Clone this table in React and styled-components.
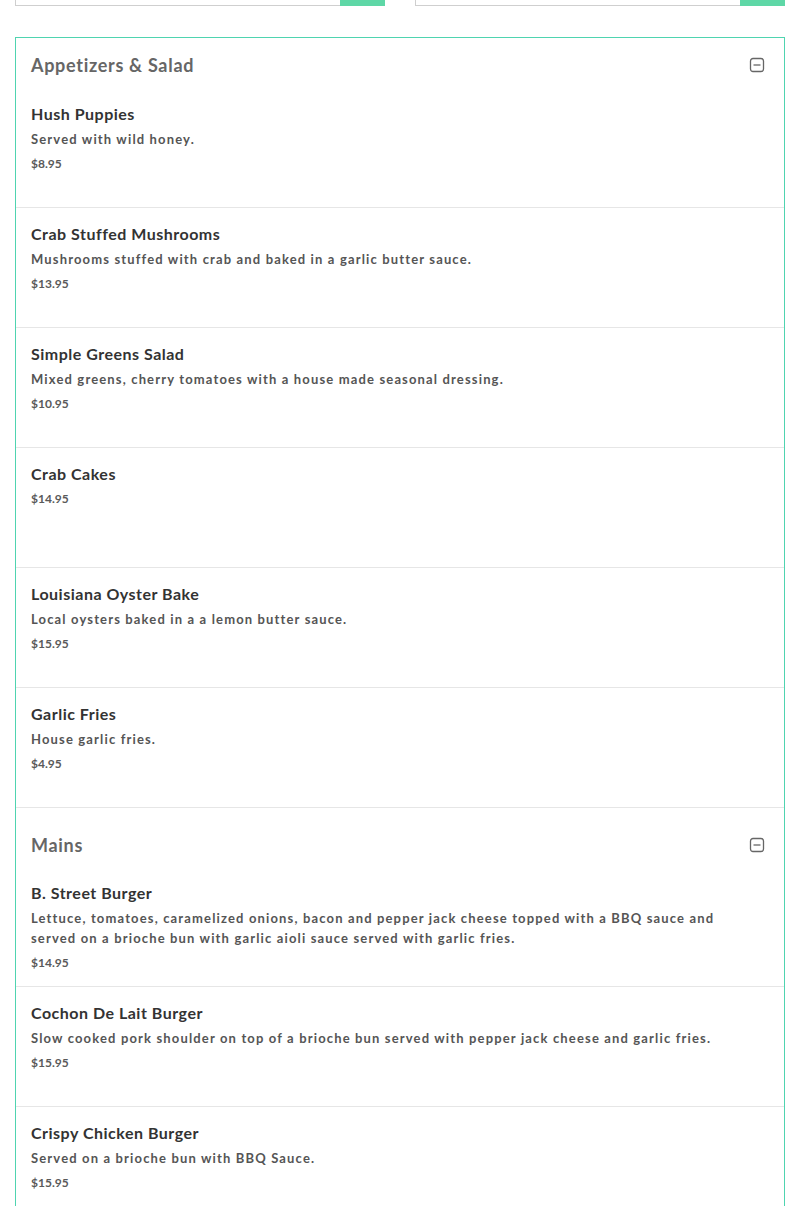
import React from 'react';
import styled, { createGlobalStyle } from 'styled-components';

const GlobalStyle = createGlobalStyle`
  body {
    margin: 0;
    background: #fff;
    font-family: Lato, 'Liberation Sans', sans-serif;
  }
`;

const Page = styled.div`
  padding: 0 15px;
`;

const SearchRow = styled.div`
  display: flex;
  gap: 30px;
  height: 6px;
  overflow: hidden;
  align-items: flex-end;
`;

const SearchBox = styled.div`
  flex: 1;
  display: flex;
  height: 40px;
  border: 1px solid #cfcfcf;
  box-sizing: border-box;
`;

const SearchInput = styled.div`
  flex: 1;
`;

const SearchButton = styled.div`
  width: 45px;
  margin: -1px -1px -1px 0;
  background-color: #5ed7a6;
`;

const Card = styled.div`
  margin-top: 31px;
  border: 1px solid #4fd4b0;
`;

const SectionHeader = styled.div`
  display: flex;
  align-items: center;
  justify-content: space-between;
  height: ${p => p.$height}px;
  padding: ${p => p.$top}px 19px 0 15px;
  box-sizing: border-box;
`;

const SectionTitle = styled.h2`
  margin: 0;
  font-size: 18px;
  font-weight: 700;
  color: #666;
  letter-spacing: 0.7px;
`;

const Item = styled.div`
  height: 120px;
  box-sizing: border-box;
  padding: 16px 60px 0 15px;
  border-bottom: 1px solid #e6e6e6;
`;

const ItemName = styled.h3`
  margin: 0 0 5px 0;
  font-size: 16px;
  font-weight: 700;
  color: #333;
  line-height: 20px;
  letter-spacing: 0.5px;
`;

const ItemDesc = styled.p`
  margin: 0 0 5px 0;
  font-size: 13px;
  font-weight: 700;
  color: #555;
  letter-spacing: 1.15px;
  line-height: 20px;
`;

const ItemPrice = styled.p`
  margin: 0;
  font-size: 12px;
  font-weight: 700;
  color: #5a5a5a;
  line-height: 20px;
`;

const MinusBox = () => (
  <svg width="16" height="16" viewBox="0 0 16 16" fill="none">
    <rect x="1.5" y="1.5" width="13" height="13" rx="2.5" stroke="#666" strokeWidth="1.3" />
    <line x1="4.5" y1="8" x2="11.5" y2="8" stroke="#666" strokeWidth="1.3" />
  </svg>
);

const sections = [
  {
    title: 'Appetizers & Salad',
    height: 50,
    top: 4,
    items: [
      { name: 'Hush Puppies', desc: 'Served with wild honey.', price: '$8.95' },
      { name: 'Crab Stuffed Mushrooms', desc: 'Mushrooms stuffed with crab and baked in a garlic butter sauce.', price: '$13.95' },
      { name: 'Simple Greens Salad', desc: 'Mixed greens, cherry tomatoes with a house made seasonal dressing.', price: '$10.95' },
      { name: 'Crab Cakes', desc: '', price: '$14.95' },
      { name: 'Louisiana Oyster Bake', desc: 'Local oysters baked in a a lemon butter sauce.', price: '$15.95' },
      { name: 'Garlic Fries', desc: 'House garlic fries.', price: '$4.95' },
    ],
  },
  {
    title: 'Mains',
    height: 59,
    top: 14,
    items: [
      { name: 'B. Street Burger', desc: 'Lettuce, tomatoes, caramelized onions, bacon and pepper jack cheese topped with a BBQ sauce and served on a brioche bun with garlic aioli sauce served with garlic fries.', price: '$14.95' },
      { name: 'Cochon De Lait Burger', desc: 'Slow cooked pork shoulder on top of a brioche bun served with pepper jack cheese and garlic fries.', price: '$15.95' },
      { name: 'Crispy Chicken Burger', desc: 'Served on a brioche bun with BBQ Sauce.', price: '$15.95' },
    ],
  },
];

const App = () => {
  return (
    <Page>
      <GlobalStyle />
      <SearchRow>
        <SearchBox>
          <SearchInput />
          <SearchButton />
        </SearchBox>
        <SearchBox>
          <SearchInput />
          <SearchButton />
        </SearchBox>
      </SearchRow>
      <Card>
        {sections.map(section => (
          <div key={section.title}>
            <SectionHeader $height={section.height} $top={section.top}>
              <SectionTitle>{section.title}</SectionTitle>
              <MinusBox />
            </SectionHeader>
            {section.items.map(item => (
              <Item key={item.name}>
                <ItemName>{item.name}</ItemName>
                {item.desc && <ItemDesc>{item.desc}</ItemDesc>}
                <ItemPrice>{item.price}</ItemPrice>
              </Item>
            ))}
          </div>
        ))}
      </Card>
    </Page>
  );
};

export default App;
